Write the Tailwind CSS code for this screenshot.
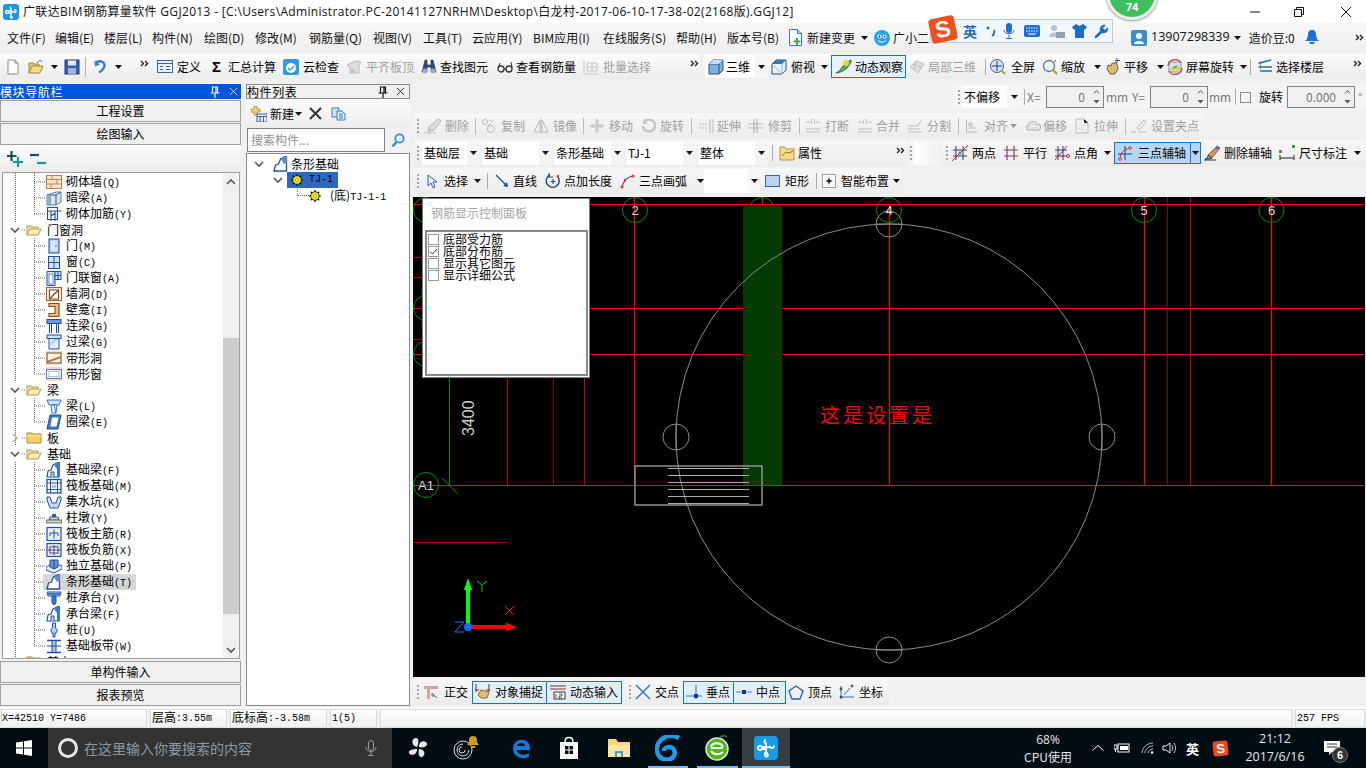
<!DOCTYPE html>
<html lang="zh"><head><meta charset="utf-8"><title>GGJ2013</title>
<script src="https://cdn.jsdelivr.net/npm/@tailwindcss/browser@4"></script></head>
<body>
<svg class="hidden" width="0" height="0"><defs>
<symbol id="dd" viewBox="0 0 7 4"><path d="M0 0h7L3.500 4z" fill="#111"/></symbol>
<symbol id="spin" viewBox="0 0 7 16"><path d="M1 4.500l2.500-3 2.500 3" stroke="#555" fill="none"/><path d="M.5 11h6l-3 3.500z" fill="#555"/></symbol>
<symbol id="more" viewBox="0 0 9 7"><path d="M1 1l2.500 2.500L1 6M5 1l2.500 2.500L5 6" stroke="#222" stroke-width="1.400" fill="none"/></symbol>
<symbol id="chev" viewBox="0 0 10 6"><path d="M1 1l4 4 4-4" stroke="#555" stroke-width="1.600" fill="none"/></symbol>
<symbol id="folder-o" viewBox="0 0 16 12"><path d="M1 11V2h4l1 1h6v2" fill="#f4e2a6" stroke="#b59a55"/><path d="M1 11l3-6h11l-3 6z" fill="#fff0b8" stroke="#b59a55"/></symbol>
<symbol id="folder-c" viewBox="0 0 16 12"><path d="M1 11V1h5l1 1h8v9z" fill="#f6cf63" stroke="#a98d45"/><path d="M1 4h14" stroke="#fff0b8"/></symbol>
<symbol id="t-brick" viewBox="0 0 16 16"><rect x=".5" y="1.500" width="15" height="13" fill="#fde6d2" stroke="#cc7a42"/><path d="M1 5.500h14M1 10h14M6 1.500v4M11 5.500V10M5 10v4.500" stroke="#cc7a42" fill="none"/></symbol>
<symbol id="t-dark" viewBox="0 0 16 16"><path d="M1 5l9-3h5v10l-5 3H1z" fill="#d9e6f5" stroke="#5a7ea8"/><path d="M1 5h9v10M10 5l5-3" stroke="#2f5d93" fill="none"/><rect x="1" y="5" width="4" height="10" fill="#8eaccd"/></symbol>
<symbol id="t-rebar" viewBox="0 0 16 16"><path d="M1.500 1.500h10v12h-10zM1.500 5h14M5 5v10M9 5v10M5 10l4-3" stroke="#1f4fa8" fill="#fff" stroke-width="1.100"/></symbol>
<symbol id="t-door" viewBox="0 0 16 16"><rect x="3" y="1" width="10" height="14" fill="#a9c4ee" stroke="#1f4fa8"/><rect x="4.500" y="2.500" width="7" height="11" fill="#dbe8fb"/><circle cx="10" cy="8" r=".8" fill="#1f4fa8"/></symbol>
<symbol id="t-win" viewBox="0 0 16 16"><rect x="2.500" y="2.500" width="11" height="12" fill="#cfe1fb" stroke="#1f4fa8"/><path d="M8 2.500v12M2.500 8.500h11" stroke="#1f4fa8"/></symbol>
<symbol id="t-dw" viewBox="0 0 16 16"><path d="M1 1.500h8v14H1z" fill="#dbe8fb" stroke="#1f4fa8"/><rect x="3" y="4" width="4" height="10" fill="#fff" stroke="#6a8fd0"/><path d="M9 1.500h6v8H9zM12 1.500v8M9 5.500h6" fill="#cfe1fb" stroke="#1f4fa8"/></symbol>
<symbol id="t-hole" viewBox="0 0 16 16"><rect x=".5" y="1.500" width="15" height="13" fill="#fde6d2" stroke="#a96030"/><rect x="3.500" y="4" width="9" height="9" fill="#fff" stroke="#7a4a20"/><path d="M3.500 13l9-9" stroke="#7a4a20" stroke-width="1.200"/></symbol>
<symbol id="t-niche" viewBox="0 0 16 16"><path d="M3 1.500h10v13H3v-3h6v-7H3z" fill="#f4b98c" stroke="#8c4a18" stroke-width="1.200"/></symbol>
<symbol id="t-lb" viewBox="0 0 16 16"><rect x="1" y="1.500" width="14" height="4" fill="#6a9be0" stroke="#1f4fa8"/><path d="M3.500 5.500V15M5.500 5.500V15M10.500 5.500V15M12.500 5.500V15" stroke="#1f4fa8"/></symbol>
<symbol id="t-gl" viewBox="0 0 16 16"><rect x="1" y="1" width="14" height="3.500" fill="#cfe1fb" stroke="#1f4fa8"/><path d="M3 4.500h10v10.500H3z" fill="#e6f0fd" stroke="#1f4fa8"/><path d="M3 12l5-7h5" fill="#a9c4ee"/></symbol>
<symbol id="t-sh" viewBox="0 0 16 16"><rect x="0" y="1" width="16" height="14" fill="#f8d8c4"/><rect x="1" y="3" width="14" height="10" fill="#fff4e6" stroke="#7a4a20"/><path d="M1 11l14-5v2L1 13z" fill="#a9744a"/></symbol>
<symbol id="t-sw" viewBox="0 0 16 16"><rect x="0" y="1" width="16" height="14" fill="#fbd9c9"/><rect x=".5" y="3.500" width="15" height="9" fill="#e9f0fc" stroke="#5a7cd0"/><rect x="3" y="5.500" width="10" height="5" fill="#fff" stroke="#a9c4ee"/></symbol>
<symbol id="t-beam" viewBox="0 0 16 16"><path d="M1 2h14l-2 5H3z" fill="#cfe1fb" stroke="#2a7ac0"/><path d="M5 7h6l-1 8H6z" fill="#fff" stroke="#2a7ac0"/><path d="M8 7l2 8" stroke="#2a7ac0"/></symbol>
<symbol id="t-ring" viewBox="0 0 16 16"><path d="M4 1h11l-3 14H1z" fill="#3f78c8" stroke="#1f4fa8"/><path d="M6 3.500h6.500l-2 9H4.500z" fill="#fff"/></symbol>
<symbol id="t-fb" viewBox="0 0 16 16"><path d="M1 15l1-6 3-1 2-5 6-3v15z" fill="#fff" stroke="#1f4fa8" stroke-width="1.200"/><path d="M8 3l6-3v15h-3V7z" fill="#3f78c8"/><path d="M5 15V10h3v5" fill="#bcd3ef" stroke="#1f4fa8"/></symbol>
<symbol id="t-raft" viewBox="0 0 16 16"><rect x="1" y="1.500" width="14" height="13.500" fill="#fff" stroke="#1f4fa8" stroke-width="1.300"/><path d="M1 5h14M1 11.500h14M4.500 1.500v13.500M11.500 1.500v13.500" stroke="#1f4fa8"/><path d="M6 7h4v3H6z" fill="#a9c4ee"/></symbol>
<symbol id="t-sump" viewBox="0 0 16 16"><path d="M1 3h3l2 6h4l2-6h3v3l-3 8H4L1 6z" fill="#cfe1fb" stroke="#1f4fa8"/><path d="M5 9v5M8 10v4M11 9v5" stroke="#8eaccd" stroke-dasharray="1 1"/></symbol>
<symbol id="t-pier" viewBox="0 0 16 16"><path d="M6 4h4v3H6z" fill="#2f5d93"/><path d="M4 7h8l1 3H3z" fill="#cdd8e6" stroke="#2f5d93"/><rect x="0.500" y="10" width="15" height="3" fill="#c9c9c9" stroke="#777"/></symbol>
<symbol id="t-rm" viewBox="0 0 16 16"><rect x="1" y="1.500" width="14" height="13" fill="#e6f0fd" stroke="#1f4fa8" stroke-width="1.200"/><path d="M8 3.500v9M4 7h8M4 7v3M12 7v3" stroke="#1f4fa8" fill="none"/></symbol>
<symbol id="t-rn" viewBox="0 0 16 16"><rect x="1" y="1.500" width="14" height="13" fill="#dbe8fb" stroke="#1f4fa8" stroke-width="1.200"/><rect x="4" y="5" width="8" height="6" fill="#fff" stroke="#8a2a3a"/><path d="M8 3v10M2 8h12" stroke="#1f4fa8"/></symbol>
<symbol id="t-if" viewBox="0 0 16 16"><path d="M0 9l8-4 8 3v3l-8 4-8-3z" fill="#e6f0fd" stroke="#1f4fa8"/><path d="M4 2h8v7l-4 2-4-2z" fill="#6a94c8" stroke="#1f4fa8"/><path d="M8 2v9" stroke="#1f4fa8"/></symbol>
<symbol id="t-sf" viewBox="0 0 16 16"><path d="M1 15l1.500-6 3-1 2-5 6-3v15z" fill="#fff" stroke="#1f4fa8" stroke-width="1.300"/><path d="M8 3l6-3v7l-3 1z" fill="#5d8dc8"/></symbol>
<symbol id="t-pc" viewBox="0 0 16 16"><path d="M1 2h14l-1 4H2z" fill="#cfe1fb" stroke="#1f4fa8"/><path d="M2 4h13" stroke="#3f78c8" stroke-width="2"/><path d="M6 6h4v7l-2 2-2-2z" fill="#3f78c8" stroke="#1f4fa8"/></symbol>
<symbol id="t-pile" viewBox="0 0 16 16"><path d="M6.500 1h3v5l2 2-1.500 3H9v4H7v-4H6L4.500 8l2-2z" fill="#bcd3ef" stroke="#1f4fa8"/></symbol>
<symbol id="t-slab" viewBox="0 0 16 16"><path d="M1 2.500h14M1 14.500h14" stroke="#1f4fa8" stroke-width="1.600"/><path d="M6 3h4v11H6z" fill="#a9c4ee"/><path d="M6 3v11M10 3v11M1 8h14" stroke="#1f4fa8"/></symbol>
<symbol id="gear" viewBox="0 0 14 14"><path d="M7 0v14M0 7h14M2 2l10 10M2 12L12 2" stroke="#111" stroke-width="1.400"/><circle cx="7" cy="7" r="5" fill="#ffee00" stroke="#111" stroke-width="1"/><circle cx="7" cy="7" r="2" fill="#ffff66" stroke="#555" stroke-width=".6"/></symbol>
<symbol id="pin" viewBox="0 0 10 12"><path d="M2.500 1h5v6h-5zM0.500 7h9M5 7v5M6 1v6" stroke="#111" fill="none" stroke-width="1.200"/></symbol>
<symbol id="x" viewBox="0 0 10 10"><path d="M1 1l8 8M9 1l-8 8" stroke="#111" stroke-width=".9"/></symbol>
<symbol id="g-erase" viewBox="0 0 18 16"><path d="M4 10L14 1l3 2-8 10z" fill="#dcdcdc" stroke="#b5b5b5"/><path d="M1 14c2 0 3-1 3-4l4 3c-1 1-3 1-7 1z" fill="#c6c6c6"/><path d="M0 15h12" stroke="#c0c0c0"/></symbol>
<symbol id="g-copy" viewBox="0 0 16 16"><circle cx="4" cy="4" r="2.500" fill="none" stroke="#b9b9b9"/><circle cx="10" cy="11" r="3.500" fill="none" stroke="#b9b9b9"/><path d="M9 2l2 2 2-2M6 9l4-4" stroke="#bbb" fill="none"/></symbol>
<symbol id="g-mirror" viewBox="0 0 16 16"><path d="M7 2L1 14h6zM9 2l6 12H9z" fill="none" stroke="#b5b5b5"/><path d="M8 0v16" stroke="#c9c9c9"/></symbol>
<symbol id="g-move" viewBox="0 0 14 14"><path d="M7 0l2 3H8v3h3V5l3 2-3 2V8H8v3h1l-2 3-2-3h1V8H3v1L0 7l3-2v1h3V3H5z" fill="#d0d0d0" stroke="#b8b8b8" stroke-width=".5"/></symbol>
<symbol id="g-rot" viewBox="0 0 14 14"><path d="M3 2a6 6 0 1 1-2 5" fill="none" stroke="#c5c5c5" stroke-width="2.600"/><path d="M1 0v5h5" fill="#c5c5c5"/></symbol>
<symbol id="g-ext" viewBox="0 0 16 16"><path d="M1 6h8M1 10h8" stroke="#bbb" stroke-dasharray="2 1"/><path d="M12 1v14M15 1v14" stroke="#bbb"/></symbol>
<symbol id="g-trim" viewBox="0 0 16 16"><path d="M0 6h15M0 10h15" stroke="#bbb"/><path d="M6 1v14M9 1v14" stroke="#aaa"/></symbol>
<symbol id="g-brk" viewBox="0 0 16 16"><path d="M1 4h4M11 4h4M1 11h14M1 14h14" stroke="#bbb"/><path d="M7 1l-1 5M9 1l1 5" stroke="#bbb"/></symbol>
<symbol id="g-split" viewBox="0 0 16 16"><path d="M1 14h14M1 8h10l3-6M1 11h12" stroke="#bbb" fill="none"/></symbol>
<symbol id="g-align" viewBox="0 0 14 14"><path d="M1.500 1v12h11M4 4h3v3H4zM4 9h7" stroke="#b5b5b5" fill="none"/></symbol>
<symbol id="g-off" viewBox="0 0 16 14"><path d="M3 11a3 3 0 0 1 0-5 5 5 0 0 1 9-1 3 3 0 0 1 1 6z" fill="none" stroke="#c0c0c0" stroke-width="1.500"/><path d="M5 9a1 1 0 0 1 1-3 3 3 0 0 1 4 0 1 1 0 0 1 1 3z" fill="none" stroke="#ccc"/></symbol>
<symbol id="g-stre" viewBox="0 0 14 16"><path d="M1 1h8l4 4v10H1z" fill="none" stroke="#bbb"/><path d="M9 1v4h4M4 8h6M4 11h6" stroke="#c5c5c5" stroke-dasharray="1 1"/></symbol>
<symbol id="g-grip" viewBox="0 0 16 16"><path d="M6 10L13 2l2 2-7 8zM0 14h5M7 14h8" fill="none" stroke="#bbb"/></symbol>
</defs></svg>

<div class="relative flex h-[768px] w-[1366px] flex-col overflow-hidden bg-[#f0f0f0] font-['Noto_Sans_CJK_SC',sans-serif] text-[12px] leading-none text-black">

<!-- title -->
<div class="flex h-[23px] shrink-0 items-center bg-white pl-[3px]">
<svg class="h-[16px] w-[16px] shrink-0" viewBox="0 0 16 16"><rect width="16" height="16" rx="3" fill="#1b97ea"/><path d="M8 3c-1 0-1 1.500 0 2v2H5c-1-1-2.500-.5-2.500 1s1.500 2 2.500 1h3v3c-1 .5-.5 2 .5 2s1-1.500-.5-2m0-4h3c1 1 2 .5 2-1s-1-1.500-2-1" fill="none" stroke="#fff" stroke-width="1.400"/></svg>
<span class="ml-[4px] w-[1190px] whitespace-nowrap font-['Open_Sans','Noto_Sans_CJK_SC',sans-serif] text-[12px] tracking-[0.33px] text-[#111]">广联达BIM钢筋算量软件 GGJ2013 - [C:\Users\Administrator.PC-20141127NRHM\Desktop\白龙村-2017-06-10-17-38-02(2168版).GGJ12]</span>
<svg class="ml-[37px] h-[10px] w-[10px]" viewBox="0 0 10 10"><path d="M0 5h10" stroke="#111"/></svg>
<svg class="ml-[34px] h-[10px] w-[10px]" viewBox="0 0 10 10"><path d="M2.500 2.500V.5h7v7h-2M.5 2.500h7v7h-7z" fill="none" stroke="#111"/></svg>
<svg class="ml-[37px] h-[10px] w-[10px]" viewBox="0 0 10 10"><path d="M0 0l10 10M10 0L0 10" stroke="#111"/></svg>
</div>

<!-- menu -->
<div class="flex h-[29px] shrink-0 items-center bg-linear-to-b from-[#f8f8f8] to-[#eeeeee] pl-[7px] whitespace-nowrap text-[#111]">
<div class="w-[48px]">文件(F)</div><div class="w-[49px]">编辑(E)</div><div class="w-[48px]">楼层(L)</div><div class="w-[52px]">构件(N)</div><div class="w-[51px]">绘图(D)</div><div class="w-[54px]">修改(M)</div><div class="w-[64px]">钢筋量(Q)</div><div class="w-[50px]">视图(V)</div><div class="w-[49px]">工具(T)</div><div class="w-[61px]">云应用(Y)</div><div class="w-[70px]">BIM应用(I)</div><div class="w-[73px]">在线服务(S)</div><div class="w-[51px]">帮助(H)</div><div class="w-[61px]">版本号(B)</div>
<div class="flex w-[86px] items-center"><svg class="h-[17px] w-[15px]" viewBox="0 0 15 17"><path d="M1.500.5h8l4 4v12h-12z" fill="#fff" stroke="#3a78c4"/><path d="M9.500.5v4h4" fill="#bcd6f2" stroke="#3a78c4"/><path d="M8 9v2.500H5.500v2H8V16h2v-2.500h2.500v-2H10V9z" fill="#3fae3f"/></svg><span class="ml-[4px]">新建变更</span><svg class="ml-[6px] h-[4px] w-[7px]"><use href="#dd"/></svg></div>
<div class="flex w-[257px] items-center"><svg class="h-[16px] w-[16px]" viewBox="0 0 16 16"><circle cx="8" cy="8" r="8" fill="#2aa3ee"/><circle cx="5.500" cy="6.500" r="2" fill="#fff"/><circle cx="10.500" cy="6.500" r="2" fill="#fff"/><circle cx="5.500" cy="6.500" r=".9" fill="#123"/><circle cx="10.500" cy="6.500" r=".9" fill="#123"/><path d="M4 10.500c2 2 6 2 8 0" stroke="#fff" fill="none"/></svg><span class="ml-[3px]">广小二</span></div>
<svg class="h-[16px] w-[16px]" viewBox="0 0 16 16"><rect width="16" height="16" rx="2" fill="#3a8fc9"/><circle cx="8" cy="6" r="3" fill="#fff"/><path d="M3 14c0-4 10-4 10 0z" fill="#fff"/></svg>
<span class="ml-[4px] font-['Open_Sans',sans-serif] text-[12.500px]">13907298339</span>
<svg class="ml-[4px] h-[4px] w-[7px]"><use href="#dd"/></svg>
<span class="ml-[8px]">造价豆:0</span>
<svg class="ml-[10px] h-[15px] w-[14px]" viewBox="0 0 14 15"><path d="M7 0c3 0 4 2 4 5l1 4 2 2H0l2-2 1-4c0-3 1-5 4-5z" fill="#1b6fe0"/><path d="M4 12c1 3 5 3 6 0z" fill="#1b6fe0"/></svg>
<svg class="ml-[36px] h-[7px] w-[9px]"><use href="#more"/></svg>
</div>

<!-- toolbar row 1 -->
<div class="flex h-[29px] shrink-0 items-start gap-[1px] pt-[2px] whitespace-nowrap">
<div class="flex h-[25px] w-[152px] items-center rounded-[2px] bg-linear-to-b from-[#fcfcfc] to-[#ececec] pl-[5px]">
<svg class="h-[16px] w-[16px]" viewBox="0 0 16 16"><path d="M3 1h7l3 3v11H3z" fill="#fff" stroke="#8a8a8a"/><path d="M10 1v3h3" fill="#ddd" stroke="#8a8a8a"/></svg>
<svg class="ml-[7px] h-[16px] w-[16px]" viewBox="0 0 16 16"><path d="M1 14V4h4l1 1h5v2" fill="#e8c66a" stroke="#a5873c"/><path d="M1 14l3-7h11l-3 7z" fill="#f4dc8c" stroke="#a5873c"/><path d="M9 4l3-3 2 2" stroke="#3a78c4" fill="none"/></svg>
<svg class="ml-[7px] h-[4px] w-[7px]"><use href="#dd"/></svg>
<svg class="ml-[6px] h-[16px] w-[16px]" viewBox="0 0 16 16"><rect x="1" y="1" width="14" height="14" fill="#3b5ea8" stroke="#223a75"/><rect x="4" y="1.500" width="8" height="5" fill="#e4e9f3"/><rect x="4" y="9" width="8" height="6" fill="#9ab2dc"/></svg>
<div class="ml-[5px] h-[20px] w-px bg-[#b5b5b5]"></div>
<svg class="ml-[7px] h-[16px] w-[16px]" viewBox="0 0 16 16"><path d="M3 3.500c5-3 10 0 8 5-1 2-3 4-5 5" fill="none" stroke="#2f7fd8" stroke-width="2.400"/><path d="M1.500 1.500l.5 6 5-2z" fill="#2f7fd8"/></svg>
<svg class="ml-[6px] h-[4px] w-[7px]"><use href="#dd"/></svg>
<svg class="ml-[18px] mb-[6px] h-[7px] w-[9px]"><use href="#more"/></svg>
</div>
<div class="flex h-[25px] w-[547px] items-center rounded-[2px] bg-linear-to-b from-[#fcfcfc] to-[#ececec] pl-[4px]">
<div class="flex w-[54px] items-center gap-[4px]"><svg class="h-[13px] w-[16px]" viewBox="0 0 16 13"><rect x=".5" y=".5" width="15" height="12" fill="#e7eef8" stroke="#46638c"/><path d="M1 3.500h14M3 6.500h3M3 9.500h3M9 6.500h4M9 9.500h4" stroke="#46638c"/></svg><span>定义</span></div>
<div class="flex w-[72px] items-center gap-[7px]"><span class="w-[10px] pl-[1px] font-['Liberation_Sans'] text-[15px] font-bold">Σ</span><span>汇总计算</span></div>
<div class="flex w-[63px] items-center gap-[4px]"><svg class="h-[16px] w-[16px]" viewBox="0 0 16 16"><rect width="16" height="16" rx="2" fill="#2f9be0"/><circle cx="8" cy="9" r="5" fill="#fff"/><path d="M5 9l2 2 4-4" stroke="#2f9be0" fill="none" stroke-width="1.300"/></svg><span>云检查</span></div>
<div class="flex w-[75px] items-center gap-[4px] text-[#a0a0a0]"><svg class="h-[16px] w-[16px]" viewBox="0 0 16 16"><path d="M1 6l9-4 5 1-2 3v8H4V8z" fill="#ddd" stroke="#bbb"/><path d="M5 10h4v4H5z" fill="#c5c5c5"/></svg><span>平齐板顶</span></div>
<div class="flex w-[76px] items-center gap-[3px]"><svg class="h-[16px] w-[16px]" viewBox="0 0 16 16"><path d="M4 1h2v5h4V1h2l3 12h-5V8H6v5H1z" fill="#2e4a78" stroke="#1d3359" stroke-width=".6"/><circle cx="4" cy="12" r="2.500" fill="#8fb2dc"/><circle cx="12" cy="12" r="2.500" fill="#8fb2dc"/></svg><span>查找图元</span></div>
<div class="flex w-[86px] items-center gap-[3px]"><svg class="h-[12px] w-[16px]" viewBox="0 0 16 12"><circle cx="4" cy="8" r="3" fill="#fff" stroke="#333" stroke-width="1.300"/><circle cx="12" cy="8" r="3" fill="#fff" stroke="#333" stroke-width="1.300"/><path d="M7 8h2M1 7l2-5M15 7l-1-6" stroke="#333"/></svg><span>查看钢筋量</span></div>
<div class="flex w-[107px] items-center gap-[4px] text-[#a0a0a0]"><svg class="h-[16px] w-[16px]" viewBox="0 0 16 16"><path d="M1 1v14h14M4 4h10v8H4zM4 8h10M9 4v8" fill="none" stroke="#c5c5c5"/></svg><span>批量选择</span></div>
<svg class="mb-[6px] h-[7px] w-[9px]"><use href="#more"/></svg>
</div>
<div class="ml-[2px] flex h-[25px] w-[663px] items-center rounded-[2px] bg-linear-to-b from-[#fcfcfc] to-[#ececec] pl-[2px]">
<div class="flex h-[23px] w-[50px] items-center gap-[2px] bg-white pl-[3px]"><svg class="h-[16px] w-[16px]" viewBox="0 0 16 16"><path d="M1 5l4-4h10v10l-4 4H1z" fill="#7fb2e0" stroke="#2b4f78"/><path d="M1 5h10v10M11 5l4-4" stroke="#2b4f78" fill="none"/><path d="M5 1h10l-4 4H1z" fill="#c7def4"/></svg><span>三维</span></div>
<div class="flex h-[23px] w-[13px] items-center justify-center bg-[#f6f6f6]"><svg class="h-[4px] w-[7px]"><use href="#dd"/></svg></div>
<div class="flex w-[63px] items-center gap-[4px] pl-[3px]"><svg class="h-[16px] w-[16px] shrink-0" viewBox="0 0 16 16"><path d="M1 5l4-4h10v10l-4 4H1z" fill="#e8f1fa" stroke="#2b4f78"/><path d="M5 1h10l-4 4H1z" fill="#3a78b8"/><path d="M1 5l10 10M11 5v10" stroke="#8fb2dc"/></svg><span>俯视</span><svg class="ml-[2px] h-[4px] w-[7px] shrink-0"><use href="#dd"/></svg></div>
<div class="flex h-[23px] w-[75px] items-center gap-[3px] border border-[#0a78d7] bg-[#e9f2fa] pl-[3px]"><svg class="h-[17px] w-[17px] shrink-0" viewBox="0 0 17 17"><path d="M1 15c3-1 5-4 7-7 3-3 7-6 8-6s-1 5-4 8-8 5-11 5z" fill="#6aa84a" stroke="#3a6e2a"/><circle cx="11" cy="5" r="3" fill="#e6d24a"/></svg><span>动态观察</span></div>
<div class="flex w-[79px] items-center gap-[3px] pl-[3px] text-[#a0a0a0]"><svg class="h-[16px] w-[16px] shrink-0" viewBox="0 0 16 16"><path d="M1 8l6-6 8 3-6 9z" fill="#ddd" stroke="#bbb"/><path d="M4 5l8 3M7 2L5 11" stroke="#c5c5c5"/></svg><span>局部三维</span></div>
<div class="h-[16px] w-[5px] border-l border-[#aaa]"></div>
<div class="flex w-[52px] items-center gap-[5px]"><svg class="h-[16px] w-[16px] shrink-0" viewBox="0 0 16 16"><circle cx="7" cy="7" r="6.500" fill="#d8e4f4" stroke="#3a5a8c"/><path d="M7 2v10M2 7h10" stroke="#1f3f80"/><path d="M12 12l3 3" stroke="#c89020" stroke-width="2"/></svg><span>全屏</span></div>
<div class="flex w-[63px] items-center gap-[3px]"><svg class="h-[16px] w-[16px] shrink-0" viewBox="0 0 16 16"><circle cx="7" cy="7" r="5.500" fill="#f0f5fb" stroke="#5a7394" stroke-width="1.300"/><path d="M11 11l4 4" stroke="#c89020" stroke-width="2.200"/><path d="M12 3l2-2" stroke="#2b4f78"/></svg><span>缩放</span><svg class="ml-[6px] h-[4px] w-[7px] shrink-0"><use href="#dd"/></svg></div>
<div class="flex w-[62px] items-center gap-[3px]"><svg class="h-[17px] w-[16px] shrink-0" viewBox="0 0 16 17"><path d="M2 11l1-4 3 1 1-3 2 1 1-2 2 2 1 5-3 5H5z" fill="#d8b878" stroke="#7a6030"/><path d="M12 0v5M10 2.500h5" stroke="#2b4f78"/></svg><span>平移</span><svg class="ml-[6px] h-[4px] w-[7px] shrink-0"><use href="#dd"/></svg></div>
<div class="flex w-[83px] items-center gap-[3px]"><svg class="h-[16px] w-[16px] shrink-0" viewBox="0 0 16 16"><rect x="2" y="3" width="12" height="10" fill="#cfe6f7" stroke="#6a9ad0"/><path d="M3 10l5-3 5 1v3H3z" fill="#e6c84a"/><path d="M1 7a7 7 0 0 1 13-3M15 9a7 7 0 0 1-13 3" stroke="#d8402a" fill="none" stroke-width="1.300"/><path d="M6 9l4-2" stroke="#3a9a3a" stroke-width="1.300"/></svg><span>屏幕旋转</span><svg class="ml-[3px] h-[4px] w-[7px] shrink-0"><use href="#dd"/></svg></div>
<div class="h-[16px] w-[8px] border-l border-[#aaa]"></div>
<div class="flex w-[95px] items-center gap-[3px]"><svg class="h-[15px] w-[15px] shrink-0" viewBox="0 0 15 15"><path d="M2 4l11-3M2 8h12M2 12h12" stroke="#1f6fa8" stroke-width="1.500"/><path d="M0 8l3-2v4zM0 4l3-2v4z" fill="#2aa05a"/></svg><span>选择楼层</span></div>
<svg class="mb-[6px] h-[7px] w-[9px]"><use href="#more"/></svg>
</div>
</div>

<!-- main -->
<div class="flex h-[626px] shrink-0">
<!-- nav panel -->
<div class="flex w-[241px] shrink-0 flex-col pt-[3px]">
<div class="flex h-[15px] items-center bg-[#0055e5] text-white"><span class="tracking-[0.6px]">模块导航栏</span><svg class="ml-[147px] h-[12px] w-[10px] invert"><use href="#pin"/></svg><svg class="ml-[9px] h-[9px] w-[9px] invert"><use href="#x"/></svg></div>
<div class="mt-[1px] flex h-[22px] items-center justify-center border border-[#a0a0a0] bg-[#f0f0f0] text-[12px]">工程设置</div>
<div class="mt-[1px] flex h-[22px] items-center justify-center border border-[#a0a0a0] bg-[#f0f0f0] text-[12px]">绘图输入</div>
<div class="flex h-[27px] items-center rounded-t-[2px] bg-linear-to-b from-[#fcfcfc] to-[#ececec] pl-[7px]">
<svg class="h-[16px] w-[16px]" viewBox="0 0 16 16"><path d="M4.500 0v10M0 5h9.500" stroke="#14505f" stroke-width="2.200"/><path d="M11 6v10M6 11h10" stroke="#0f9a9a" stroke-width="2.200"/></svg>
<svg class="ml-[7px] h-[16px] w-[16px]" viewBox="0 0 16 16"><path d="M0 4h9" stroke="#14505f" stroke-width="2.200"/><path d="M7 12h9" stroke="#0f9a9a" stroke-width="2.200"/></svg>
</div>
<div class="relative ml-[2px] flex h-[487px] w-[238px] overflow-hidden border border-[#a0a0a0] bg-white">
<svg class="absolute left-0 top-0 h-[485px] w-[100px]" viewBox="3 173 100 485" fill="none" stroke="#666" stroke-dasharray="1 1">
<path d="M15.500 173v49M15.500 238v144M15.500 398v48M15.500 462v196M34.500 173v41M34.500 238v136M34.500 398v24M34.500 462v184"/>
<path d="M34 182h12M34 198h12M34 214h12M34 246h12M34 262h12M34 278h12M34 294h12M34 310h12M34 326h12M34 342h12M34 358h12M34 374h12M34 406h12M34 422h12M34 470h12M34 486h12M34 502h12M34 518h12M34 534h12M34 550h12M34 566h12M34 582h12M34 598h12M34 614h12M34 630h12M34 646h12M22 230h4M22 390h4M22 438h4M22 454h4"/>
</svg>
<div class="relative flex-1 pt-[1px] whitespace-nowrap">
<div class="flex h-[16px] items-center pl-[43px]"><svg class="h-[16px] w-[16px]"><use href="#t-brick"/></svg><span class="ml-[4px]">砌体墙<span class="font-['Liberation_Mono'] text-[10px]">(Q)</span></span></div>
<div class="flex h-[16px] items-center pl-[43px]"><svg class="h-[16px] w-[16px]"><use href="#t-dark"/></svg><span class="ml-[4px]">暗梁<span class="font-['Liberation_Mono'] text-[10px]">(A)</span></span></div>
<div class="flex h-[16px] items-center pl-[43px]"><svg class="h-[16px] w-[16px]"><use href="#t-rebar"/></svg><span class="ml-[4px]">砌体加筋<span class="font-['Liberation_Mono'] text-[10px]">(Y)</span></span></div>
<div class="flex h-[16px] items-center pl-[7px]"><svg class="h-[6px] w-[10px]"><use href="#chev"/></svg><svg class="ml-[6px] h-[12px] w-[16px]"><use href="#folder-o"/></svg><span class="ml-[5px]">门窗洞</span></div>
<div class="flex h-[16px] items-center pl-[43px]"><svg class="h-[16px] w-[16px]"><use href="#t-door"/></svg><span class="ml-[4px]">门<span class="font-['Liberation_Mono'] text-[10px]">(M)</span></span></div>
<div class="flex h-[16px] items-center pl-[43px]"><svg class="h-[16px] w-[16px]"><use href="#t-win"/></svg><span class="ml-[4px]">窗<span class="font-['Liberation_Mono'] text-[10px]">(C)</span></span></div>
<div class="flex h-[16px] items-center pl-[43px]"><svg class="h-[16px] w-[16px]"><use href="#t-dw"/></svg><span class="ml-[4px]">门联窗<span class="font-['Liberation_Mono'] text-[10px]">(A)</span></span></div>
<div class="flex h-[16px] items-center pl-[43px]"><svg class="h-[16px] w-[16px]"><use href="#t-hole"/></svg><span class="ml-[4px]">墙洞<span class="font-['Liberation_Mono'] text-[10px]">(D)</span></span></div>
<div class="flex h-[16px] items-center pl-[43px]"><svg class="h-[16px] w-[16px]"><use href="#t-niche"/></svg><span class="ml-[4px]">壁龛<span class="font-['Liberation_Mono'] text-[10px]">(I)</span></span></div>
<div class="flex h-[16px] items-center pl-[43px]"><svg class="h-[16px] w-[16px]"><use href="#t-lb"/></svg><span class="ml-[4px]">连梁<span class="font-['Liberation_Mono'] text-[10px]">(G)</span></span></div>
<div class="flex h-[16px] items-center pl-[43px]"><svg class="h-[16px] w-[16px]"><use href="#t-gl"/></svg><span class="ml-[4px]">过梁<span class="font-['Liberation_Mono'] text-[10px]">(G)</span></span></div>
<div class="flex h-[16px] items-center pl-[43px]"><svg class="h-[16px] w-[16px]"><use href="#t-sh"/></svg><span class="ml-[4px]">带形洞</span></div>
<div class="flex h-[16px] items-center pl-[43px]"><svg class="h-[16px] w-[16px]"><use href="#t-sw"/></svg><span class="ml-[4px]">带形窗</span></div>
<div class="flex h-[16px] items-center pl-[7px]"><svg class="h-[6px] w-[10px]"><use href="#chev"/></svg><svg class="ml-[6px] h-[12px] w-[16px]"><use href="#folder-o"/></svg><span class="ml-[5px]">梁</span></div>
<div class="flex h-[16px] items-center pl-[43px]"><svg class="h-[16px] w-[16px]"><use href="#t-beam"/></svg><span class="ml-[4px]">梁<span class="font-['Liberation_Mono'] text-[10px]">(L)</span></span></div>
<div class="flex h-[16px] items-center pl-[43px]"><svg class="h-[16px] w-[16px]"><use href="#t-ring"/></svg><span class="ml-[4px]">圈梁<span class="font-['Liberation_Mono'] text-[10px]">(E)</span></span></div>
<div class="flex h-[16px] items-center pl-[9px]"><svg class="h-[10px] w-[6px]" viewBox="0 0 6 10"><path d="M1 1l4 4-4 4" stroke="#aaa" stroke-width="1.500" fill="none"/></svg><svg class="ml-[8px] h-[12px] w-[16px]"><use href="#folder-c"/></svg><span class="ml-[5px]">板</span></div>
<div class="flex h-[16px] items-center pl-[7px]"><svg class="h-[6px] w-[10px]"><use href="#chev"/></svg><svg class="ml-[6px] h-[12px] w-[16px]"><use href="#folder-o"/></svg><span class="ml-[5px]">基础</span></div>
<div class="flex h-[16px] items-center pl-[43px]"><svg class="h-[16px] w-[16px]"><use href="#t-fb"/></svg><span class="ml-[4px]">基础梁<span class="font-['Liberation_Mono'] text-[10px]">(F)</span></span></div>
<div class="flex h-[16px] items-center pl-[43px]"><svg class="h-[16px] w-[16px]"><use href="#t-raft"/></svg><span class="ml-[4px]">筏板基础<span class="font-['Liberation_Mono'] text-[10px]">(M)</span></span></div>
<div class="flex h-[16px] items-center pl-[43px]"><svg class="h-[16px] w-[16px]"><use href="#t-sump"/></svg><span class="ml-[4px]">集水坑<span class="font-['Liberation_Mono'] text-[10px]">(K)</span></span></div>
<div class="flex h-[16px] items-center pl-[43px]"><svg class="h-[16px] w-[16px]"><use href="#t-pier"/></svg><span class="ml-[4px]">柱墩<span class="font-['Liberation_Mono'] text-[10px]">(Y)</span></span></div>
<div class="flex h-[16px] items-center pl-[43px]"><svg class="h-[16px] w-[16px]"><use href="#t-rm"/></svg><span class="ml-[4px]">筏板主筋<span class="font-['Liberation_Mono'] text-[10px]">(R)</span></span></div>
<div class="flex h-[16px] items-center pl-[43px]"><svg class="h-[16px] w-[16px]"><use href="#t-rn"/></svg><span class="ml-[4px]">筏板负筋<span class="font-['Liberation_Mono'] text-[10px]">(X)</span></span></div>
<div class="flex h-[16px] items-center pl-[43px]"><svg class="h-[16px] w-[16px]"><use href="#t-if"/></svg><span class="ml-[4px]">独立基础<span class="font-['Liberation_Mono'] text-[10px]">(P)</span></span></div>
<div class="ml-[40px] flex h-[16px] w-[93px] items-center bg-[#d6d6d6] pl-[3px]"><svg class="h-[16px] w-[16px]"><use href="#t-sf"/></svg><span class="ml-[4px]">条形基础<span class="font-['Liberation_Mono'] text-[10px]">(T)</span></span></div>
<div class="flex h-[16px] items-center pl-[43px]"><svg class="h-[16px] w-[16px]"><use href="#t-pc"/></svg><span class="ml-[4px]">桩承台<span class="font-['Liberation_Mono'] text-[10px]">(V)</span></span></div>
<div class="flex h-[16px] items-center pl-[43px]"><svg class="h-[16px] w-[16px]"><use href="#t-fb"/></svg><span class="ml-[4px]">承台梁<span class="font-['Liberation_Mono'] text-[10px]">(F)</span></span></div>
<div class="flex h-[16px] items-center pl-[43px]"><svg class="h-[16px] w-[16px]"><use href="#t-pile"/></svg><span class="ml-[4px]">桩<span class="font-['Liberation_Mono'] text-[10px]">(U)</span></span></div>
<div class="flex h-[16px] items-center pl-[43px]"><svg class="h-[16px] w-[16px]"><use href="#t-slab"/></svg><span class="ml-[4px]">基础板带<span class="font-['Liberation_Mono'] text-[10px]">(W)</span></span></div>
<div class="flex h-[16px] items-center pl-[23px]"><svg class="h-[12px] w-[16px]"><use href="#folder-c"/></svg><span class="ml-[5px]">其它</span></div>
</div>
<div class="flex w-[16px] shrink-0 flex-col bg-[#f0f0f0]">
<div class="flex h-[17px] items-center justify-center"><svg class="h-[6px] w-[10px] rotate-180"><use href="#chev"/></svg></div>
<div class="h-[148px]"></div><div class="h-[276px] bg-[#cdcdcd]"></div><div class="h-[27px]"></div>
<div class="flex h-[17px] items-center justify-center"><svg class="h-[6px] w-[10px]"><use href="#chev"/></svg></div>
</div>
</div>
<div class="mt-[2px] flex h-[22px] items-center justify-center border border-[#a0a0a0] bg-[#f0f0f0]">单构件输入</div>
<div class="mt-[1px] flex h-[22px] items-center justify-center border border-[#a0a0a0] bg-[#f0f0f0]">报表预览</div>
</div>

<!-- component list -->
<div class="ml-[5px] flex w-[164px] shrink-0 flex-col pt-[3px] whitespace-nowrap">
<div class="flex h-[15px] items-center border border-[#8a8a8a] bg-[#f0f0f0]"><span class="tracking-[0.6px]">构件列表</span><svg class="ml-[81px] h-[12px] w-[10px]"><use href="#pin"/></svg><svg class="ml-[8px] h-[9px] w-[9px]"><use href="#x"/></svg></div>
<div class="flex h-[29px] items-center bg-linear-to-b from-[#fcfcfc] to-[#ececec] pl-[5px]">
<svg class="h-[16px] w-[16px]" viewBox="0 0 16 16"><path d="M3 0h3v3h3v3H6v3H3V6H0V3h3z" fill="#f2d36a" stroke="#a98d45" stroke-width=".8"/><rect x="6" y="8" width="10" height="8" fill="#e7eef8" stroke="#3a62a8"/><path d="M6 10.500h10M9 10.500V16M12.500 10.500V16" stroke="#3a62a8"/></svg>
<span class="ml-[3px]">新建</span><svg class="ml-[1px] h-[4px] w-[7px]"><use href="#dd"/></svg>
<svg class="ml-[7px] h-[13px] w-[13px]" viewBox="0 0 13 13"><path d="M1 1l11 11M12 1L1 12" stroke="#333" stroke-width="2"/></svg>
<svg class="ml-[9px] h-[14px] w-[15px]" viewBox="0 0 15 14"><path d="M1 1h7v9H1z" fill="#cfe1fb" stroke="#3a78c4"/><path d="M6 4h5l3 3v6H6z" fill="#e6f0fd" stroke="#3a78c4"/><path d="M8 7h4M8 9h4M8 11h4" stroke="#3a78c4"/></svg>
</div>
<div class="flex h-[24px] items-center">
<div class="ml-[1px] flex h-[24px] w-[138px] items-center border border-[#808080] bg-white pl-[3px] text-[#909090]">搜索构件...</div>
<svg class="ml-[6px] h-[15px] w-[14px]" viewBox="0 0 14 15"><circle cx="8.500" cy="5.500" r="4.200" fill="#eef6fd" stroke="#2d8fe0" stroke-width="1.800"/><path d="M5.500 9l-4 4.500" stroke="#2d8fe0" stroke-width="2.400"/></svg>
</div>
<div class="mt-[1px] h-[553px] border border-[#8a8a8a] bg-white">
<div class="box-content flex h-[16px] items-center pl-[7px] pt-[2px]"><svg class="h-[6px] w-[10px]"><use href="#chev"/></svg><svg class="ml-[8px] h-[16px] w-[18px]" viewBox="0 0 16 16"><use href="#t-sf"/></svg><span class="ml-[1px]">条形基础</span></div>
<div class="flex h-[16px] items-center pl-[26px]"><svg class="h-[6px] w-[10px]"><use href="#chev"/></svg><div class="ml-[4px] flex h-[16px] w-[51px] items-center bg-[#2f66c0] pl-[4px]"><svg class="h-[12px] w-[12px]"><use href="#gear"/></svg><span class="ml-[6px] font-['Liberation_Mono'] text-[10px]">TJ-1</span></div></div>
<div class="relative flex h-[16px] items-center pl-[62px]"><div class="absolute left-[50px] top-[-2px] h-[10px] w-[12px] border-b border-l border-dotted border-[#666]"></div><svg class="h-[12px] w-[12px]"><use href="#gear"/></svg><span class="ml-[9px]">(底)<span class="font-['Liberation_Mono'] text-[10px]">TJ-1-1</span></span></div>
</div>
</div>

<!-- right column -->
<div class="flex w-[956px] shrink-0 flex-col whitespace-nowrap">
<!-- offset row -->
<div class="flex h-[31px] shrink-0 justify-end pt-[3px]">
<div class="flex h-[26px] w-[413px] items-center rounded-[2px] bg-[#f4f4f4] text-[12px]">
<div class="ml-[5px] h-[14px] w-[4px] border-l-2 border-dotted border-[#a5a5a5]"></div>
<div class="flex h-[22px] w-[45px] items-center bg-white pl-[2px]">不偏移</div>
<div class="flex h-[22px] w-[14px] items-center justify-center bg-[#f6f6f6]"><svg class="h-[4px] w-[7px]"><use href="#dd"/></svg></div>
<div class="ml-[3px] h-[16px] w-px bg-[#aaa]"></div>
<span class="ml-[2px] w-[19px] text-[#777]">X=</span>
<div class="flex h-[22px] w-[58px] items-center justify-end border border-[#808080] bg-[#f0f0f0] pr-[3px] text-[#777]">0<svg class="ml-[8px] h-[16px] w-[7px]"><use href="#spin"/></svg></div>
<span class="ml-[2px] w-[26px] text-[#777]">mm</span><span class="w-[18px] text-[#777]">Y=</span>
<div class="flex h-[22px] w-[58px] items-center justify-end border border-[#808080] bg-[#f0f0f0] pr-[3px] text-[#777]">0<svg class="ml-[8px] h-[16px] w-[7px]"><use href="#spin"/></svg></div>
<span class="ml-[1px] w-[26px] text-[#777]">mm</span>
<div class="h-[16px] w-px bg-[#aaa]"></div>
<div class="ml-[4px] h-[11px] w-[11px] border border-[#8a8a8a]"></div>
<span class="ml-[8px] w-[28px]">旋转</span>
<div class="flex h-[22px] w-[68px] items-center justify-end border border-[#808080] bg-[#f0f0f0] pr-[3px] text-[#777]">0.000<svg class="ml-[8px] h-[16px] w-[7px]"><use href="#spin"/></svg></div>
<span class="ml-[3px] text-[#777]">°</span>
</div>
</div>
<!-- edit row -->
<div class="flex h-[28px] shrink-0 items-start pt-[1px] pl-[4px] text-[#a0a0a0]">
<div class="flex h-[25px] w-[790px] items-center rounded-[2px] bg-linear-to-b from-[#f7f7f7] to-[#ececec]">
<div class="h-[14px] w-[10px] pl-[3px]"><div class="h-[14px] border-l-2 border-dotted border-[#a5a5a5]"></div></div>
<div class="flex w-[51px] items-center gap-[3px]"><svg class="h-[16px] w-[18px] shrink-0"><use href="#g-erase"/></svg><span>删除</span></div><div class="h-[16px] w-[6px] border-l border-[#bbb]"></div>
<div class="flex w-[52px] items-center gap-[4px]"><svg class="h-[16px] w-[16px] shrink-0"><use href="#g-copy"/></svg><span>复制</span></div>
<div class="flex w-[50px] items-center gap-[4px]"><svg class="h-[16px] w-[16px] shrink-0"><use href="#g-mirror"/></svg><span>镜像</span></div><div class="h-[16px] w-[7px] border-l border-[#bbb]"></div>
<div class="flex w-[52px] items-center gap-[5px]"><svg class="h-[14px] w-[14px] shrink-0"><use href="#g-move"/></svg><span>移动</span></div>
<div class="flex w-[49px] items-center gap-[4px]"><svg class="h-[14px] w-[14px] shrink-0"><use href="#g-rot"/></svg><span>旋转</span></div><div class="h-[16px] w-[7px] border-l border-[#bbb]"></div>
<div class="flex w-[50px] items-center gap-[3px]"><svg class="h-[16px] w-[16px] shrink-0"><use href="#g-ext"/></svg><span>延伸</span></div>
<div class="flex w-[51px] items-center gap-[4px]"><svg class="h-[16px] w-[16px] shrink-0"><use href="#g-trim"/></svg><span>修剪</span></div><div class="h-[16px] w-[6px] border-l border-[#bbb]"></div>
<div class="flex w-[52px] items-center gap-[4px]"><svg class="h-[16px] w-[16px] shrink-0"><use href="#g-brk"/></svg><span>打断</span></div>
<div class="flex w-[50px] items-center gap-[3px]"><svg class="h-[16px] w-[16px] shrink-0"><use href="#g-brk"/></svg><span>合并</span></div>
<div class="flex w-[51px] items-center gap-[4px]"><svg class="h-[16px] w-[16px] shrink-0"><use href="#g-split"/></svg><span>分割</span></div><div class="h-[16px] w-[7px] border-l border-[#bbb]"></div>
<div class="flex w-[60px] items-center gap-[5px]"><svg class="h-[14px] w-[14px] shrink-0"><use href="#g-align"/></svg><span>对齐</span><svg class="ml-[-3px] h-[4px] w-[7px] shrink-0 opacity-40"><use href="#dd"/></svg></div>
<div class="flex w-[50px] items-center gap-[2px]"><svg class="h-[14px] w-[16px] shrink-0"><use href="#g-off"/></svg><span>偏移</span></div>
<div class="flex w-[50px] items-center gap-[5px]"><svg class="h-[16px] w-[14px] shrink-0"><use href="#g-stre"/></svg><span>拉伸</span></div><div class="h-[16px] w-[6px] border-l border-[#bbb]"></div>
<div class="flex items-center gap-[4px]"><svg class="h-[16px] w-[16px] shrink-0"><use href="#g-grip"/></svg><span>设置夹点</span></div>
</div>
</div>
<!-- combo row -->
<div class="flex h-[28px] shrink-0 items-start pl-[4px]">
<div class="flex h-[26px] w-[493px] shrink-0 items-center rounded-[2px] bg-linear-to-b from-[#f7f7f7] to-[#ececec]">
<div class="h-[14px] w-[8px] pl-[3px]"><div class="h-[14px] border-l-2 border-dotted border-[#a5a5a5]"></div></div>
<div class="flex h-[23px] w-[57px] items-center justify-between bg-white pl-[2px]">基础层<div class="flex h-[23px] w-[12px] items-center justify-center bg-[#f4f4f4]"><svg class="h-[4px] w-[7px]"><use href="#dd"/></svg></div></div>
<div class="ml-[3px] flex h-[23px] w-[69px] items-center justify-between bg-white pl-[2px]">基础<div class="flex h-[23px] w-[12px] items-center justify-center bg-[#f4f4f4]"><svg class="h-[4px] w-[7px]"><use href="#dd"/></svg></div></div>
<div class="ml-[3px] flex h-[23px] w-[69px] items-center justify-between bg-white pl-[2px]">条形基础<div class="flex h-[23px] w-[12px] items-center justify-center bg-[#f4f4f4]"><svg class="h-[4px] w-[7px]"><use href="#dd"/></svg></div></div>
<div class="ml-[3px] flex h-[23px] w-[69px] items-center justify-between bg-white pl-[2px]">TJ-1<div class="flex h-[23px] w-[12px] items-center justify-center bg-[#f4f4f4]"><svg class="h-[4px] w-[7px]"><use href="#dd"/></svg></div></div>
<div class="ml-[3px] flex h-[23px] w-[69px] items-center justify-between bg-white pl-[2px]">整体<div class="flex h-[23px] w-[12px] items-center justify-center bg-[#f4f4f4]"><svg class="h-[4px] w-[7px]"><use href="#dd"/></svg></div></div>
<div class="ml-[5px] h-[16px] w-[7px] border-l border-[#aaa]"></div>
<svg class="h-[15px] w-[16px]" viewBox="0 0 16 15"><path d="M1 14V1h5l1 2h8v11z" fill="#f4dc8c" stroke="#c98a3a"/><path d="M3 10l4-4 3 1 4-2" stroke="#8a6a2a" fill="none"/></svg>
<span class="ml-[3px]">属性</span>
<svg class="ml-[74px] mb-[6px] h-[7px] w-[9px]"><use href="#more"/></svg>
</div>
<div class="ml-[3px] flex h-[26px] w-[29px] shrink-0 items-center bg-[#f4f4f4]"><div class="h-[14px] w-[4px] border-l-2 border-dotted border-[#a5a5a5]"></div><div class="h-[24px] w-[24px] bg-linear-to-r from-white to-[#f0f0f0]"></div></div>
<div class="ml-[3px] flex h-[26px] w-[424px] shrink-0 items-center rounded-[2px] bg-linear-to-b from-[#f7f7f7] to-[#ececec]">
<div class="h-[14px] w-[10px] pl-[4px]"><div class="h-[14px] border-l-2 border-dotted border-[#a5a5a5]"></div></div>
<div class="flex w-[51px] items-center gap-[4px]"><svg class="h-[16px] w-[16px] shrink-0" viewBox="0 0 16 16"><path d="M4 1v14M11 1v14M1 5h14M1 11h14" stroke="#2a3f7a"/><path d="M0 16L16 0" stroke="#d8201a"/><circle cx="8" cy="8" r="1.500" fill="#4a9a2a"/></svg><span>两点</span></div>
<div class="flex w-[52px] items-center gap-[5px]"><svg class="h-[16px] w-[15px] shrink-0" viewBox="0 0 15 16"><path d="M4 1v14M11 1v14" stroke="#2a3f7a"/><path d="M1 5h14M1 11h14" stroke="#b02a3a"/></svg><span>平行</span></div>
<div class="flex w-[59px] items-center gap-[4px]"><svg class="h-[16px] w-[15px] shrink-0" viewBox="0 0 15 16"><path d="M3 1v14M8 1v14M0 5h12M0 11h12" stroke="#2a3f7a"/><path d="M0 15L12 1" stroke="#d8201a"/><circle cx="13" cy="11" r="1.500" fill="none" stroke="#d8201a"/></svg><span>点角</span><svg class="ml-[2px] h-[4px] w-[7px] shrink-0"><use href="#dd"/></svg></div>
<div class="flex h-[22px] w-[87px] items-center border border-[#0a78d7] bg-[#b5d6f0] pl-[3px]"><svg class="h-[15px] w-[15px] shrink-0" viewBox="0 0 15 15"><path d="M2 14C2 7 6 3 12 2" stroke="#d8201a" fill="none"/><path d="M0 8h14M7 0v14" stroke="#2a3f7a"/><circle cx="12" cy="2" r="1.300" fill="#fff" stroke="#d8201a"/><circle cx="2" cy="13" r="1.300" fill="#fff" stroke="#d8201a"/></svg><span class="ml-[5px] w-[50px]">三点辅轴</span><div class="ml-[2px] flex h-[20px] flex-1 items-center justify-center border-l border-[#0a78d7]"><svg class="h-[4px] w-[7px]"><use href="#dd"/></svg></div></div>
<div class="ml-[3px] flex w-[75px] items-center gap-[4px]"><svg class="h-[16px] w-[16px] shrink-0" viewBox="0 0 16 16"><path d="M4 10l9-9 3 2-8 10z" fill="#c89a60" stroke="#6a4a20" stroke-width=".7"/><path d="M13 1l3 2-2 2-3-2z" fill="#5a6ac0"/><path d="M1 14c2 0 3-1 3-4l4 3c-1 1-3 1-7 1zM0 15h12" fill="#99a" stroke="#334"/></svg><span>删除辅轴</span></div>
<div class="flex items-center gap-[4px]"><svg class="h-[16px] w-[16px] shrink-0" viewBox="0 0 16 16"><path d="M1 10v5M15 10v5M1 13h14" stroke="#222"/><rect x="0" y="5" width="3" height="3" fill="#3aa03a"/><rect x="13" y="0" width="3" height="3" fill="#3aa03a"/></svg><span>尺寸标注</span><svg class="ml-[3px] h-[4px] w-[7px] shrink-0"><use href="#dd"/></svg></div>
</div>
</div>
<!-- draw row -->
<div class="flex h-[29px] shrink-0 items-start pl-[4px]">
<div class="flex h-[26px] w-[488px] items-center rounded-[2px] bg-linear-to-b from-[#f7f7f7] to-[#ececec]">
<div class="h-[14px] w-[12px] pl-[3px]"><div class="h-[14px] border-l-2 border-dotted border-[#a5a5a5]"></div></div>
<div class="flex w-[61px] items-center"><svg class="h-[15px] w-[12px] shrink-0" viewBox="0 0 12 15"><path d="M2 1v11l3-3 2 5 2-1-2-5h4z" fill="#e8eefb" stroke="#3a62a8"/></svg><span class="ml-[6px]">选择</span><svg class="ml-[6px] h-[4px] w-[7px] shrink-0"><use href="#dd"/></svg></div>
<div class="h-[16px] w-[8px] border-l border-[#aaa]"></div>
<div class="flex w-[50px] items-center gap-[4px]"><svg class="h-[14px] w-[14px] shrink-0" viewBox="0 0 14 14"><path d="M1 1l11 11" stroke="#1f4f9a" stroke-width="1.300"/><path d="M13 13l-5-1 4-4z" fill="#1f4f9a"/></svg><span>直线</span></div>
<div class="flex w-[75px] items-center gap-[3px]"><svg class="h-[16px] w-[16px] shrink-0" viewBox="0 0 16 16"><path d="M5 2a6.500 6.500 0 1 0 7 1" fill="none" stroke="#1f3f80" stroke-width="1.400"/><path d="M4 0v4h4" fill="none" stroke="#1f3f80"/><path d="M8 6v5M5.500 8.500h5" stroke="#1f3f80"/><circle cx="13" cy="3" r="1.200" fill="#d8402a"/></svg><span>点加长度</span></div>
<div class="flex w-[84px] items-center gap-[4px]"><svg class="h-[15px] w-[15px] shrink-0" viewBox="0 0 15 15"><path d="M2 14C3 7 7 3 13 2" stroke="#1f3f80" fill="none" stroke-width="1.200"/><circle cx="2" cy="13" r="1.600" fill="#d8402a"/><circle cx="5" cy="6" r="1.300" fill="#d8402a"/><circle cx="13" cy="2" r="1.600" fill="#d8402a"/></svg><span>三点画弧</span><svg class="ml-[6px] h-[4px] w-[7px] shrink-0"><use href="#dd"/></svg></div>
<div class="flex h-[24px] w-[56px] items-center justify-end bg-white"><div class="flex h-[24px] w-[12px] items-center justify-center bg-[#f7f7f7]"><svg class="h-[4px] w-[7px]"><use href="#dd"/></svg></div></div>
<div class="ml-[5px] flex w-[51px] items-center gap-[5px]"><svg class="h-[12px] w-[15px] shrink-0" viewBox="0 0 15 12"><rect x=".5" y=".5" width="14" height="11" fill="#bcd0f2" stroke="#3a62a8"/></svg><span>矩形</span></div>
<div class="h-[16px] w-[6px] border-l border-[#aaa]"></div>
<div class="flex items-center gap-[5px]"><svg class="h-[14px] w-[14px] shrink-0" viewBox="0 0 14 14"><rect x=".5" y=".5" width="13" height="13" fill="#fff" stroke="#445" stroke-dasharray="1 1"/><path d="M7 3l1 3 3 1-3 1-1 3-1-3-3-1 3-1z" fill="#223"/></svg><span>智能布置</span><svg class="ml-[-1px] h-[4px] w-[7px] shrink-0"><use href="#dd"/></svg></div>
</div>
</div>
<!-- canvas -->
<div class="relative ml-[3px] h-[480px] w-[952px] shrink-0 overflow-hidden bg-black">
<svg class="absolute left-0 top-0 h-[480px] w-[952px]" viewBox="413 197 952 480" fill="none">
<g stroke="#ff0000" stroke-width="1.200"><path d="M413 204.500H1366M413 308.500H1366M413 354.500H1366M413 485.500H1366"/><path d="M634.500 197V485M762.500 197V204M889.500 204V485M1144.500 197V485M1271.500 197V485"/></g>
<path d="M507.500 377V485M584.500 377V485M1190.500 197V485" stroke="#c80000"/><path d="M553.500 377V485M1167.500 197V485" stroke="#900000"/>
<path d="M413 257.500H423M413 277.500H423M413 339.500H423" stroke="#a80000"/>
<path d="M449.500 377V485" stroke="#0a8a0a"/><path d="M442 478l16 16" stroke="#0a8a0a"/>
<path d="M413 542.500H507" stroke="#a80000"/>
<circle cx="762" cy="210" r="12.500" stroke="#009000"/>
<rect x="743" y="205" width="39" height="280" fill="#033a03"/>
<g stroke="#009000"><circle cx="635" cy="210" r="12.500"/><circle cx="889" cy="210" r="12.500"/><circle cx="1144" cy="210" r="12.500"/><circle cx="1271.500" cy="210" r="12.500"/><circle cx="426" cy="485" r="12.500"/><circle cx="426" cy="308" r="12.500"/><circle cx="426" cy="354" r="12.500"/><circle cx="426" cy="210" r="12.500"/></g>
<g stroke="#8c8c8c"><circle cx="889" cy="437" r="213"/><circle cx="676" cy="437" r="13"/><circle cx="1102" cy="437" r="13"/><circle cx="889" cy="224" r="13"/><circle cx="889" cy="650" r="13"/><path d="M676 424V450M1102 424V450M876 224H902M876 650H902"/></g>
<rect x="635" y="466" width="127" height="39" stroke="#909090" stroke-width="1.500"/>
<path d="M668 468.500H749M668 475.500H749M668 482.500H749M668 489.500H749M668 496.500H749M668 503.500H749" stroke="#b4aca6"/>
<g fill="#dcdcdc" font-family="Liberation Sans" font-size="13" text-anchor="middle"><text x="635" y="215">2</text><text x="889" y="215">4</text><text x="1144" y="215">5</text><text x="1271.500" y="215">6</text><text x="426" y="490">A1</text></g>
<text transform="translate(474 436) rotate(-90)" fill="#cfcfcf" font-family="Liberation Sans" font-size="16">3400</text>
<text x="820" y="423" fill="#ff0000" font-family="Noto Sans CJK SC" font-size="20" letter-spacing="3">这是设置是</text>
<path d="M468 627V584" stroke="#00ff00" stroke-width="4"/><path d="M464 590l4-12 4 12z" fill="#00ff00"/>
<path d="M468 627H508" stroke="#ff0000" stroke-width="4"/><path d="M506 622.500l11 4.500-11 4.500z" fill="#ff0000"/>
<circle cx="468" cy="627" r="4" fill="#0a6cff"/>
<path d="M477 581l5 4 5-4M482 585v7" stroke="#00c800"/><path d="M505 606l9 9M514 606l-9 9" stroke="#ff1010"/><path d="M455 622h9l-9 10h9" stroke="#1a78ff"/>
</svg>
<div class="absolute left-[10px] top-[2px] flex h-[178px] w-[166px] flex-col bg-white shadow-[0_0_0_1px_#808080]">
<div class="pl-[8px] pt-[8px] text-[#a5a5a5]">钢筋显示控制面板</div>
<div class="relative ml-[2px] mt-[11px] h-[146px] w-[163px] border-2 border-[#8a8a8a] bg-white pl-[1px] pt-[1px] leading-[12px]">
<div class="flex h-[12px] items-center gap-[4px]"><div class="h-[11px] w-[11px] shrink-0 border border-[#999]"></div><span>底部受力筋</span></div>
<div class="flex h-[12px] items-center gap-[4px]"><div class="flex h-[11px] w-[11px] shrink-0 items-center justify-center border border-[#999]"><svg class="h-[7px] w-[9px]" viewBox="0 0 9 7"><path d="M1 3.500l2.500 2.500L8 1" stroke="#333" fill="none"/></svg></div><span>底部分布筋</span></div>
<div class="flex h-[12px] items-center gap-[4px]"><div class="h-[11px] w-[11px] shrink-0 border border-[#999]"></div><span>显示其它图元</span></div>
<div class="flex h-[12px] items-center gap-[4px]"><div class="h-[11px] w-[11px] shrink-0 border border-[#999]"></div><span>显示详细公式</span></div>
</div>
</div>
</div>
<!-- snap row -->
<div class="flex h-[30px] shrink-0 items-start pl-[4px] pt-[2px]">
<div class="flex h-[26px] w-[209px] items-center rounded-[2px] bg-linear-to-b from-[#f7f7f7] to-[#ececec]">
<div class="h-[14px] w-[10px] pl-[3px]"><div class="h-[14px] border-l-2 border-dotted border-[#a5a5a5]"></div></div>
<div class="flex w-[48px] items-center gap-[4px]"><svg class="h-[16px] w-[16px] shrink-0" viewBox="0 0 16 16"><path d="M0 2h14v3H6v10H3V5H0z" fill="#d8a0a0"/><path d="M8 9l5 5M8 9v3h3" stroke="#667" fill="none"/></svg><span>正交</span></div>
<div class="flex h-[23px] w-[75px] items-center gap-[4px] border border-[#0a78d7] bg-[#e4eef7] pl-[2px]"><svg class="h-[16px] w-[16px] shrink-0" viewBox="0 0 16 16"><path d="M1 0v8M14 0v8M0 6h4M11 6h4" stroke="#7a2a1a"/><path d="M3 11l3-5 4 1 4 1-2 6H6z" fill="#d8c07a" stroke="#8a7030"/></svg><span>对象捕捉</span></div>
<div class="flex h-[23px] w-[75px] items-center gap-[4px] border border-l-0 border-[#0a78d7] bg-[#e4eef7] pl-[3px]"><svg class="h-[16px] w-[16px] shrink-0" viewBox="0 0 16 16"><path d="M0 2h16M0 5h16" stroke="#8a2a2a"/><path d="M4 8h11v7H4z" fill="#fff" stroke="#333"/><path d="M6 10v4M9 10h3v2H9v2h3" stroke="#333" fill="none" stroke-width=".8"/></svg><span>动态输入</span></div>
</div>
<div class="ml-[2px] flex h-[26px] w-[264px] items-center rounded-[2px] bg-linear-to-b from-[#f7f7f7] to-[#ececec]">
<div class="h-[14px] w-[10px] pl-[4px]"><div class="h-[14px] border-l-2 border-dotted border-[#a5a5a5]"></div></div>
<div class="flex w-[48px] items-center gap-[4px]"><svg class="h-[16px] w-[16px] shrink-0" viewBox="0 0 16 16"><path d="M1 1l14 14M15 1L1 15" stroke="#1f6fd0" stroke-width="1.400"/></svg><span>交点</span></div>
<div class="flex h-[23px] w-[51px] items-center gap-[4px] border border-[#0a78d7] bg-[#e4eef7] pl-[2px]"><svg class="h-[16px] w-[16px] shrink-0" viewBox="0 0 16 16"><path d="M0 12h16" stroke="#1f6fd0"/><path d="M10 1v14" stroke="#1f6fd0"/><rect x="8" y="10" width="4" height="4" fill="#123a90"/></svg><span>垂点</span></div>
<div class="flex h-[23px] w-[52px] items-center gap-[4px] border border-l-0 border-[#0a78d7] bg-[#e4eef7] pl-[2px]"><svg class="h-[16px] w-[16px] shrink-0" viewBox="0 0 16 16"><path d="M0 8h16" stroke="#7aa8e0" stroke-width="1.500"/><rect x="6" y="6" width="4" height="4" fill="#123a90"/></svg><span>中点</span></div>
<div class="ml-[2px] flex w-[51px] items-center gap-[4px]"><svg class="h-[15px] w-[16px] shrink-0" viewBox="0 0 16 15"><path d="M8 1l7 5-3 8H4L1 6z" fill="none" stroke="#1f5fc0" stroke-width="1.300"/></svg><span>顶点</span></div>
<div class="flex items-center gap-[4px]"><svg class="h-[16px] w-[16px] shrink-0" viewBox="0 0 16 16"><path d="M2 2v13M1 13h14M5 11l6-7" stroke="#1f6fd0"/><circle cx="2" cy="5" r="1" fill="none" stroke="#333"/><circle cx="13" cy="2" r="1" fill="none" stroke="#333"/><circle cx="2" cy="13" r="1" fill="none" stroke="#333"/></svg><span>坐标</span></div>
</div>
</div>
</div>
</div>

<!-- status -->
<div class="flex h-[21px] shrink-0 items-end gap-[3px] border-t-2 border-white pl-[1px] font-['Liberation_Mono','Noto_Sans_CJK_SC',monospace] text-[10px] whitespace-nowrap">
<div class="flex h-[19px] w-[146px] items-center border border-[#dcdcdc] bg-linear-to-b from-white to-[#f0f0f0]">X=42510 Y=7486</div>
<div class="flex h-[19px] w-[77px] items-center border border-[#dcdcdc] bg-linear-to-b from-white to-[#f0f0f0] pl-[1px]"><span class="text-[12px]">层高</span>:3.55m</div>
<div class="flex h-[19px] w-[97px] items-center border border-[#dcdcdc] bg-linear-to-b from-white to-[#f0f0f0] pl-[1px]"><span class="text-[12px]">底标高</span>:-3.58m</div>
<div class="flex h-[19px] w-[47px] items-center border border-[#dcdcdc] bg-linear-to-b from-white to-[#f0f0f0] pl-[1px]">1(5)</div>
<div class="h-[19px] w-[912px] border border-[#dcdcdc] bg-linear-to-b from-white to-[#f0f0f0]"></div>
<div class="flex h-[19px] w-[70px] items-center border border-[#dcdcdc] bg-linear-to-b from-white to-[#f0f0f0] pl-[1px]">257 FPS</div>
</div>

<!-- taskbar -->
<div class="flex h-[40px] shrink-0 items-center bg-[#020d13] text-white">
<div class="flex w-[48px] items-center justify-center"><svg class="h-[16px] w-[16px]" viewBox="0 0 16 16"><path d="M0 2.500l7-1v6H0zM8 1.300l8-1.300v7.500H8zM0 8.500h7v6l-7-1zM8 8.500h8V16l-8-1.300z" fill="#fff"/></svg></div>
<div class="flex h-[40px] w-[344px] items-center bg-[#333333] pl-[10px]"><div class="h-[20px] w-[20px] rounded-full border-[3px] border-[#e6e6e6]"></div><span class="ml-[6px] w-[281px] text-[14px] text-[#8b9aa8]">在这里输入你要搜索的内容</span><svg class="h-[16px] w-[12px]" viewBox="0 0 12 16"><rect x="3.500" y=".5" width="5" height="10" rx="2.500" fill="none" stroke="#999"/><path d="M1 7c0 6 10 6 10 0M6 12v3M3 15.500h6" stroke="#999" fill="none"/></svg></div>
<svg class="ml-[16px] h-[22px] w-[20px]" viewBox="0 0 20 22"><g fill="#e8e8e8"><path d="M9 10C3 9 3 1 8 1c3 0 3 5 1 9zM11 10c-1-6 7-8 8-3 0 3-5 4-8 3zM11 12c6 0 7 6 3 8-3 1-4-4-3-8zM9 12c1 5-6 8-8 4-1-3 4-4 8-4z"/></g></svg>
<svg class="ml-[25px] h-[26px] w-[28px]" viewBox="0 0 28 26"><circle cx="10" cy="15" r="9" fill="none" stroke="#ddd"/><path d="M16 15a6 6 0 1 1-6-6M12 15a3 3 0 1 1-3-3" fill="none" stroke="#ddd"/><path d="M20 1c4 0 4 3 4 6l2 3H14l2-3c0-3 0-6 4-6zM18 11h4v2h-4z" fill="#d8981a"/></svg>
<svg class="ml-[30px] h-[24px] w-[20px]" viewBox="0 0 20 24"><path d="M2 13C2 5 10 2 15 5c4 2 4 6 4 9H6c0 5 8 6 12 3v4c-7 3-16 0-16-8z" fill="#0f7ad8"/><path d="M6 10h8c0-4-7-4-8 0z" fill="#020d13"/></svg>
<svg class="ml-[28px] h-[24px] w-[20px]" viewBox="0 0 20 24"><path d="M1 6h18v17H1z" fill="#fff"/><path d="M6 6c0-6 8-6 8 0" fill="none" stroke="#fff" stroke-width="1.500"/><path d="M6 10h3.500v3.500H6zM10.500 10H14v3.500h-3.500zM6 14.500h3.500V18H6zM10.500 14.500H14V18h-3.500z" fill="#020d13"/></svg>
<svg class="ml-[29px] h-[20px] w-[22px]" viewBox="0 0 22 20"><path d="M0 1h8l2 3h12v15H0z" fill="#f7d675"/><path d="M0 7h22v12H0z" fill="#fbe6a2"/><path d="M7 13h8v6H7z" fill="#3aa0e0"/><path d="M9 15h4v4H9z" fill="#fbe6a2"/></svg>
<svg class="ml-[25px] h-[26px] w-[25px]" viewBox="0 0 25 26"><path d="M24 3c-5-3-12-3-17 1C2 8 0 15 4 21c4 5 12 5 15 0 2-4 0-9-5-9-3 0-5 2-5 4" fill="none" stroke="#1d9be8" stroke-width="4.500"/></svg>
<svg class="ml-[25px] h-[26px] w-[24px]" viewBox="0 0 24 26"><circle cx="12" cy="14" r="11" fill="#4fb81f" stroke="#dfe8d8" stroke-width="1.500"/><path d="M6 13h12M6 16c2 4 9 4 12 1M6 12c1-5 10-5 12 0" fill="none" stroke="#fff" stroke-width="2"/><path d="M15 2c3-2 6-1 7 0" stroke="#2f8a15" stroke-width="1.500" fill="none"/></svg>
<div class="ml-[13px] flex h-[40px] w-[48px] items-center justify-center bg-[#383d40]"><svg class="h-[24px] w-[24px]" viewBox="0 0 24 24"><rect width="24" height="24" rx="4" fill="#159be8"/><path d="M12 4c-2 0-2 3 0 3.500V11H8c-1-2-4-1.500-4 1s3 2.500 4 1h4v3.500c-2 .5-1 4 .5 4s2-3 -.5-4M12 11h4c1 2 4 1 4-1.500" fill="none" stroke="#fff" stroke-width="2"/></svg></div>
<div class="ml-[232px] flex h-[40px] w-[52px] flex-col items-center justify-center gap-[5px] text-[12px] text-[#e5e5e5]"><span class="font-['Open_Sans',sans-serif]">68%</span><span>CPU使用</span></div>
<svg class="ml-[18px] h-[6px] w-[12px]" viewBox="0 0 12 6"><path d="M.5 5.500L6 .5l5.500 5" stroke="#fff" fill="none"/></svg>
<svg class="ml-[10px] h-[10px] w-[16px]" viewBox="0 0 16 10"><rect x="4" y="1" width="11" height="8" fill="none" stroke="#fff"/><rect x="6" y="3" width="8" height="4" fill="#fff"/><path d="M0 2h3v4H0zM1.500 6v3" stroke="#fff"/></svg>
<svg class="ml-[11px] h-[12px] w-[14px]" viewBox="0 0 14 12"><path d="M1 11c0-5 5-10 11-10M4 11c0-4 4-7 8-7M7 11c0-2 2-4 5-4" stroke="#bbb" fill="none"/><circle cx="11" cy="10.500" r="1.300" fill="#fff"/></svg>
<svg class="ml-[7px] h-[12px] w-[15px]" viewBox="0 0 15 12"><path d="M1 4h3l4-3v10L4 8H1z" fill="none" stroke="#eee"/><path d="M10 3c1 2 1 4 0 6M12 1c2 3 2 7 0 10" stroke="#ccc" fill="none"/></svg>
<span class="ml-[9px] w-[24px] text-[13px] font-bold">英</span>
<div class="ml-[3px] flex h-[15px] w-[15px] -rotate-6 items-center justify-center rounded-[2px] bg-[#ea4a1a] font-['Liberation_Sans'] text-[13px] font-bold">S</div>
<div class="ml-[7px] flex w-[80px] flex-col items-center gap-[5px] text-[12.500px] text-[#e8e8e8]"><span class="font-['Open_Sans',sans-serif]">21:12</span><span class="font-['Open_Sans',sans-serif]">2017/6/16</span></div>
<div class="relative ml-[9px]"><svg class="h-[14px] w-[16px]" viewBox="0 0 16 14"><path d="M0 0h16v11H8l-3 3v-3H0z" fill="#fff"/><path d="M3 3h10M3 6h10" stroke="#333"/></svg><div class="absolute left-[8px] top-[6px] flex h-[16px] w-[16px] items-center justify-center rounded-full border border-[#777] bg-[#333] font-['Liberation_Sans'] text-[11px] font-bold">6</div></div>
</div>

<!-- taskbar running-app underlines -->
<div class="absolute bottom-0 left-[648px] h-[2px] w-[40px] bg-[#76b9ed]"></div>
<div class="absolute bottom-0 left-[697px] h-[2px] w-[41px] bg-[#76b9ed]"></div>
<div class="absolute bottom-0 left-[742px] h-[2px] w-[48px] bg-[#76b9ed]"></div>

<!-- floating: score ball -->
<div class="absolute left-[1106px] top-[-32px] flex h-[52px] w-[52px] items-end justify-center rounded-full border-[3px] border-[#e8efe8] bg-[#3fbf5f] pb-[5px] font-['Open_Sans',sans-serif] text-[11px] font-bold text-white shadow-[0_1px_3px_rgba(0,0,0,0.45)]">74</div>
<!-- floating: IME bar -->
<div class="absolute left-[930px] top-[19px] flex h-[24px] w-[183px] items-center border border-[#b4cbe4] bg-[#f2f7fd] pl-[32px] text-[#1b6fc9]">
<span class="text-[14px] font-bold">英</span>
<svg class="ml-[8px] h-[12px] w-[12px]" viewBox="0 0 12 12"><circle cx="3" cy="3" r="1.500" fill="#1b6fc9"/><path d="M9 5c1 2 0 5-2 6" stroke="#1b6fc9" stroke-width="1.800" fill="none"/></svg>
<svg class="ml-[6px] h-[16px] w-[12px]" viewBox="0 0 12 16"><rect x="3" y="0" width="6" height="10" rx="3" fill="#1b6fc9"/><path d="M1 7c0 5 10 5 10 0M6 12v3M3 15.500h6" stroke="#1b6fc9" fill="none"/></svg>
<svg class="ml-[9px] h-[12px] w-[16px]" viewBox="0 0 16 12"><rect width="16" height="12" rx="2" fill="#1b6fc9"/><path d="M2 3h12M2 6h12" stroke="#fff" stroke-dasharray="1.500 1"/><path d="M4 9h8" stroke="#fff"/></svg>
<svg class="ml-[8px] h-[14px] w-[17px]" viewBox="0 0 17 14"><circle cx="6" cy="4" r="3" fill="#b5c3d2"/><path d="M1 13c0-6 10-6 10 0z" fill="#b5c3d2"/><rect x="8" y="8" width="9" height="6" fill="#8ea2b8"/></svg>
<svg class="ml-[7px] h-[14px] w-[15px]" viewBox="0 0 15 14"><path d="M4 0l3.500 2L11 0l4 3-2 3-1-1v9H3V5L2 6 0 3z" fill="#1b6fc9"/></svg>
<svg class="ml-[7px] h-[15px] w-[15px]" viewBox="0 0 15 15"><path d="M1 14c-1-1 0-2 5-7C5 3 8 0 12 1L9 4l2 2 3-3c1 4-2 7-6 6-4 4-6 6-7 5z" fill="#1b6fc9"/></svg>
</div>
<div class="absolute left-[930px] top-[17px] flex h-[25px] w-[26px] -rotate-12 items-center justify-center rounded-[4px] bg-[#ee5020] font-['Liberation_Sans'] text-[23px] font-black text-white">S</div>
</div>
</body></html>
